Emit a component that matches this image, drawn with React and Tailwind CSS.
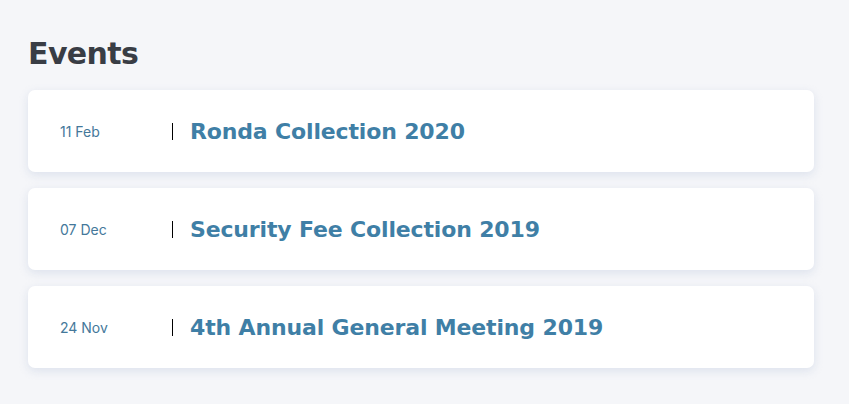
export default function App() {
  const events = [
    { date: "11 Feb", title: "Ronda Collection 2020" },
    { date: "07 Dec", title: "Security Fee Collection 2019" },
    { date: "24 Nov", title: "4th Annual General Meeting 2019" },
  ];
  return (
    <div className="min-h-[404px] w-[849px] bg-[#f5f6f9] pl-[28px] pr-[35px] pt-[34px]" style={{ fontFamily: "Inter, 'Noto Sans', sans-serif" }}>
      <h1 className="text-[30px] leading-[40px] font-bold tracking-[-0.6px] text-[#393d45]" style={{ fontFamily: "'DejaVu Sans', sans-serif" }}>Events</h1>
      <div className="mt-[16px] flex flex-col gap-[16px]">
        {events.map((e) => (
          <div key={e.title} className="flex h-[82px] items-center rounded-[7px] bg-white pl-[32px] shadow-[0_3px_10px_rgba(190,202,222,0.45)]">
            <div className="w-[112px] text-[14px] font-normal text-[#44789a]">{e.date}</div>
            <div className="h-[17px] w-px bg-black" />
            <div className="ml-[17px] text-[22px] font-bold tracking-[-0.15px] text-[#3f7fa6]" style={{ fontFamily: "'DejaVu Sans', sans-serif" }}>{e.title}</div>
          </div>
        ))}
      </div>
    </div>
  );
}
